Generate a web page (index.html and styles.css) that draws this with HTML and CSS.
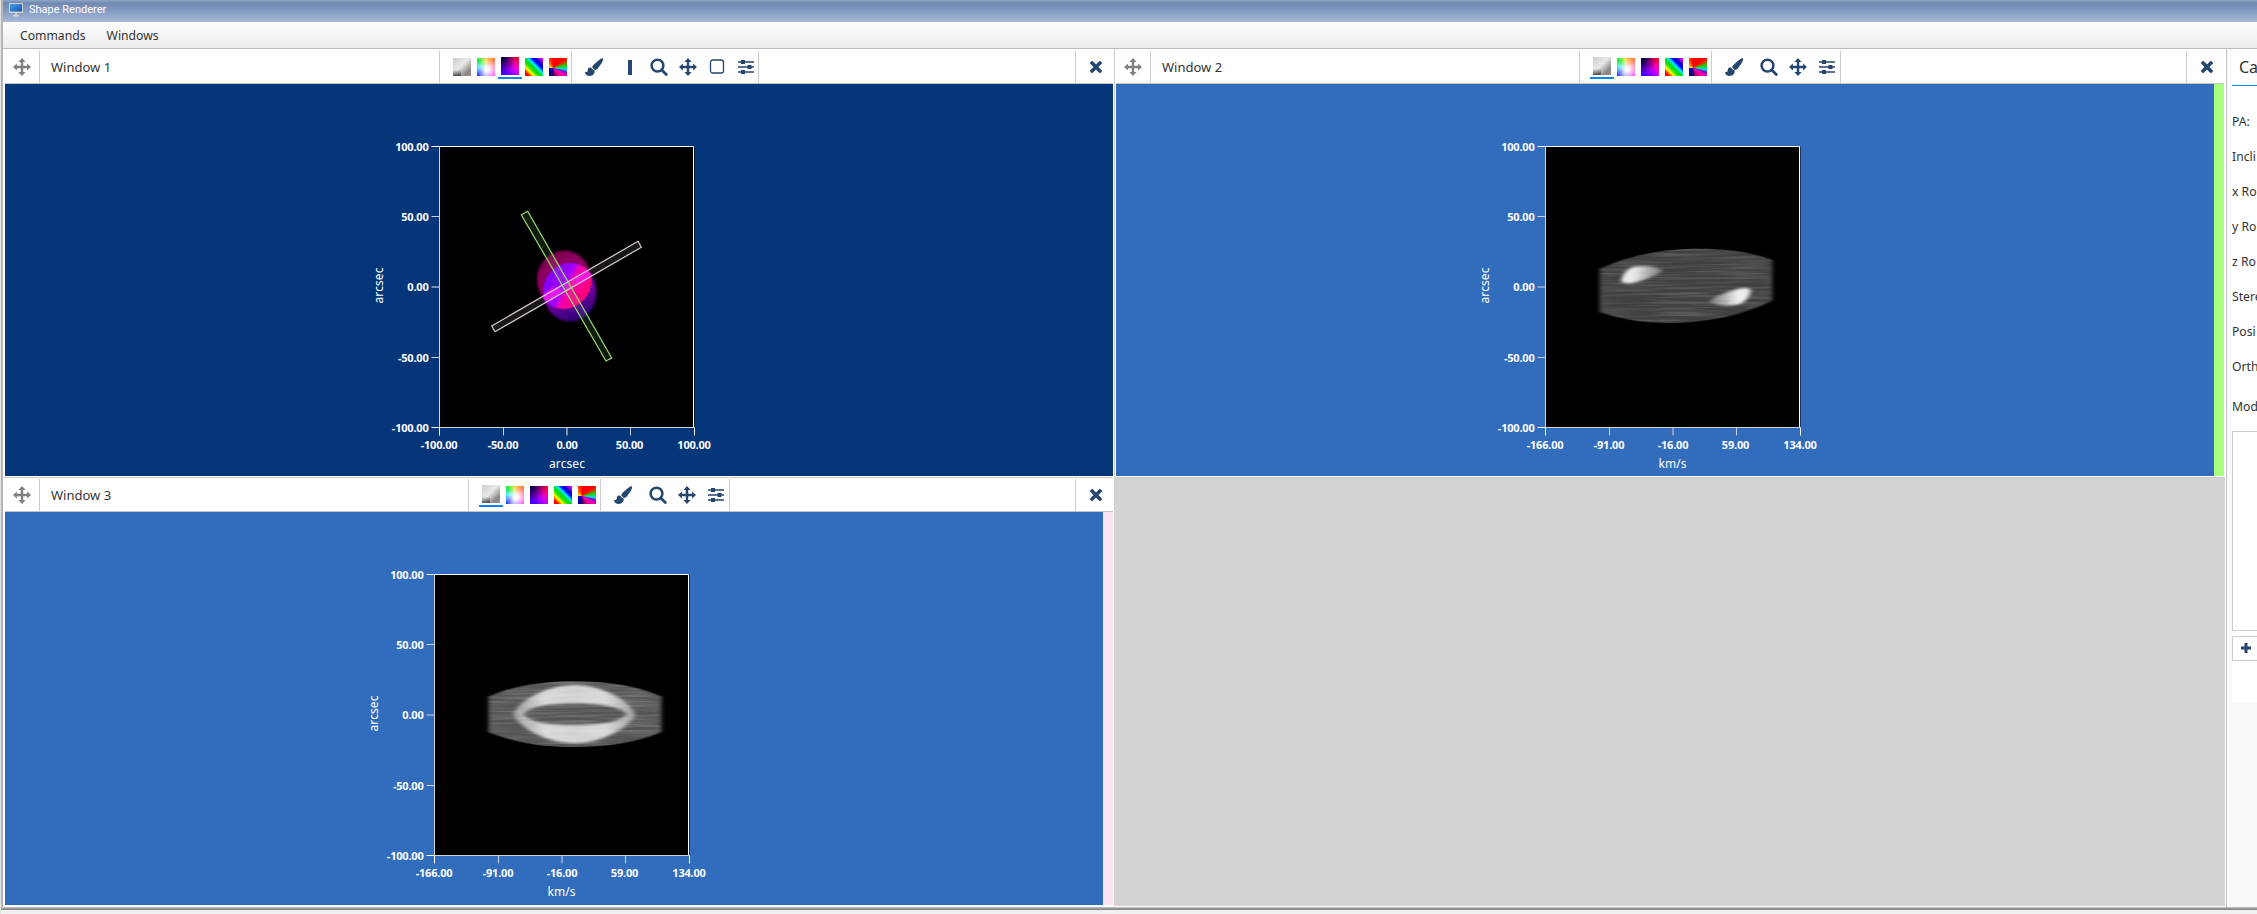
FILE: index.html
```html
<!DOCTYPE html>
<html lang="en">
<head>
<meta charset="utf-8">
<title>Shape Renderer</title>
<link rel="stylesheet" href="styles.css">
</head>
<body>
<svg class="defs" width="0" height="0">
  <defs>
    <symbol id="i-move" viewBox="0 0 18 18"><path fill="currentColor" d="M9 0l3.600 3.900h-2.400v3.900h3.900V5.400L18 9l-3.900 3.600v-2.400h-3.900v3.900h2.400L9 18l-3.600-3.900h2.400v-3.900H3.900v2.400L0 9l3.900-3.600v2.400h3.900V3.900H5.400z"/></symbol>
    <symbol id="i-brush" viewBox="0 0 18 18"><path fill="currentColor" d="M17.800.2c.7 1.300-.3 3.600-1.600 5.600l-3.400 4.700c-.8 1-1.900 1.500-3.100 1.400L7.300 9.600c0-1.200.6-2.200 1.600-3.100l4.500-4C15 1.100 16.700-.2 17.800.2zM4.700 9.400c1.500-.1 2 .6 2.500 1.500.7.9 1.700 1.200 2.500 1.600.3 3.200-1.900 5.500-5 5.500C2.400 18 .9 16.900.3 15.200c-.3-.8-.2-1.500.3-1.500 1.100.6 1.800.4 2-.8.3-1.900.6-3.300 2.100-3.500z"/></symbol>
    <symbol id="i-search" viewBox="0 0 18 18"><g fill="none" stroke="currentColor"><circle cx="7.500" cy="7.600" r="5.900" stroke-width="2.500"/><path d="M11.800 12l4.500 4.500" stroke-width="2.800" stroke-linecap="round"/></g></symbol>
    <symbol id="i-square" viewBox="0 0 18 18"><rect x="2.500" y="2" width="13" height="13" rx="2.200" fill="none" stroke="currentColor" stroke-width="1.300"/></symbol>
    <symbol id="i-sliders" viewBox="0 0 18 18"><path d="M1 4h16M1 9h16M1 14h16" stroke="currentColor" stroke-width="1.300"/><path fill="currentColor" d="M4 2h4v4H4zM10.500 7h4v4h-4zM4 12h4v4H4z"/></symbol>
    <symbol id="i-bar" viewBox="0 0 4 15"><path fill="currentColor" d="M0 0h4v15H0z"/></symbol>
    <symbol id="i-close" viewBox="0 0 12 12"><path d="M2.100 2.100l7.800 7.800M9.900 2.100L2.100 9.900" stroke="currentColor" stroke-width="3.600" stroke-linecap="square"/></symbol>
    <g id="frame">
      <rect width="255" height="281" fill="#000"/>
    </g>
    <g id="axes" fill="none" stroke="#fff">
      <path d="M0 0H254V281"/>
      <path d="M0 0V281H255" stroke="#d2d2d2"/>
      <path d="M-8 0H0M-8 281H0M0 281V289M255 281V289"/>
      <path d="M-8 70H0M-8 211H0M64 281V289M191 281V289" stroke="#c5d4ea"/>
      <path d="M-8 140.500H0M127.500 281V289" stroke="#9db2d2" stroke-width="1.500"/>
    </g>
    <g id="ylabels" text-anchor="end" class="tick">
      <text x="-11" y="4">100.00</text><text x="-11" y="74">50.00</text><text x="-11" y="144">0.00</text><text x="-11" y="215">-50.00</text><text x="-11" y="285">-100.00</text>
    </g>
    <g id="vlabels" text-anchor="middle" class="tick">
      <text x="-.5" y="302">-166.00</text><text x="63.500" y="302">-91.00</text><text x="127.500" y="302">-16.00</text><text x="190" y="302">59.00</text><text x="254.500" y="302">134.00</text>
      <text x="127" y="321" class="axis" textLength="28">km/s</text>
    </g>
    <filter id="soft" x="-20%" y="-20%" width="140%" height="140%"><feGaussianBlur stdDeviation="1"/></filter>
    <filter id="softer" x="-20%" y="-20%" width="140%" height="140%"><feGaussianBlur stdDeviation="2 0.900"/></filter>
    <filter id="edge" x="-10%" y="-10%" width="120%" height="120%"><feGaussianBlur stdDeviation="2 0.300"/></filter>
    <filter id="grain" x="0" y="0" width="100%" height="100%">
      <feTurbulence type="fractalNoise" baseFrequency="0.018 0.450" numOctaves="2" seed="4"/>
      <feColorMatrix values="0 0 0 0 1  0 0 0 0 1  0 0 0 0 1  2.200 0 0 0 -0.850"/>
      <feComposite operator="in" in2="SourceGraphic"/>
      <feGaussianBlur stdDeviation="2 0.300"/>
    </filter>
    <clipPath id="redClip"><ellipse cx="124.500" cy="133" rx="27.500" ry="29.500"/></clipPath>
    <clipPath id="blueClip"><ellipse cx="130.500" cy="146" rx="27" ry="29.500"/></clipPath>
    <linearGradient id="redLobe" x1="0" y1="0" x2=".5" y2="1"><stop offset="0" stop-color="#5d0030"/><stop offset=".35" stop-color="#8c0060"/><stop offset="1" stop-color="#900070"/></linearGradient>
    <linearGradient id="blueLobe" x1=".3" y1="0" x2=".7" y2="1"><stop offset="0" stop-color="#8a00d0"/><stop offset=".6" stop-color="#6b0098"/><stop offset="1" stop-color="#260078"/></linearGradient>
    <linearGradient id="core" gradientUnits="userSpaceOnUse" x1="118" y1="119" x2="137" y2="160"><stop offset="0" stop-color="#8400f4"/><stop offset=".43" stop-color="#a000ff"/><stop offset=".56" stop-color="#f800a8"/><stop offset="1" stop-color="#ff0070"/></linearGradient>
    <linearGradient id="knotA"><stop offset="0" stop-color="#eee"/><stop offset=".3" stop-color="#e8e8e8"/><stop offset=".65" stop-color="#aaa"/><stop offset="1" stop-color="#777"/></linearGradient>
    <linearGradient id="knotB"><stop offset="0" stop-color="#777"/><stop offset=".35" stop-color="#aaa"/><stop offset=".7" stop-color="#f2f2f2"/><stop offset="1" stop-color="#ddd"/></linearGradient>
    <linearGradient id="ring"><stop offset="0" stop-color="#999"/><stop offset=".25" stop-color="#d8d8d8"/><stop offset=".5" stop-color="#d0d0d0"/><stop offset=".75" stop-color="#d8d8d8"/><stop offset="1" stop-color="#999"/></linearGradient>
    <linearGradient id="monitor" x1="0" y1="0" x2="1" y2="1"><stop offset="0" stop-color="#4a9be8"/><stop offset=".5" stop-color="#2c7cd2"/><stop offset="1" stop-color="#1453a8"/></linearGradient>
  </defs>
</svg>
<div class="app">
  <header class="titlebar">
    <svg class="logo" width="14" height="14" viewBox="0 0 14 14"><path fill="#d5d2cb" d="M0 0h14v10H0zM4 12h6v1.500H4zM6 10h2v2H6z"/><path fill="url(#monitor)" d="M1 1h12v7.500H1z"/></svg>
    <span class="title">Shape Renderer</span>
  </header>
  <nav class="menubar"><span>Commands</span><span>Windows</span></nav>
  <main class="work">
    <div class="windows">
      <section class="window">
        <div class="head">
          <div class="grip"><svg width="18" height="18"><use href="#i-move"/></svg></div>
          <div class="name">Window 1</div>
          <div class="swatches"><i class="sw gray"></i><i class="sw pastel"></i><i class="sw magenta on"></i><i class="sw stripes"></i><i class="sw wheel"></i></div>
          <div class="tools wide">
            <svg class="brush" width="18" height="18"><use href="#i-brush"/></svg><svg class="bar" width="4" height="15"><use href="#i-bar"/></svg><svg width="18" height="18"><use href="#i-search"/></svg><svg width="18" height="18"><use href="#i-move"/></svg><svg width="18" height="18"><use href="#i-square"/></svg><svg width="18" height="18"><use href="#i-sliders"/></svg>
          </div>
          <div class="close"><svg width="12" height="12"><use href="#i-close"/></svg></div>
        </div>
        <svg class="view navy" width="1108" height="392" viewBox="0 0 1108 392">
          <g transform="translate(434.500 62.500)">
            <use href="#frame"/>
            <g filter="url(#soft)">
              <ellipse cx="124.500" cy="133" rx="27" ry="29" fill="url(#redLobe)"/>
              <ellipse cx="130.500" cy="146" rx="26.500" ry="29" fill="url(#blueLobe)"/>
            </g>
            <g clip-path="url(#redClip)"><g clip-path="url(#blueClip)"><g filter="url(#soft)">
              <ellipse cx="128" cy="139.500" rx="28" ry="22" transform="rotate(-38 128 139.500)" fill="url(#core)"/>
              <ellipse cx="144" cy="130" rx="10" ry="5" transform="rotate(-35 144 130)" fill="#f400dc"/>
              <ellipse cx="112" cy="148" rx="10" ry="5" transform="rotate(-35 112 148)" fill="#e800f0"/>
            </g></g></g>
            <path d="M52.200 179.500L55.500 185.200 201.800 100.800 198.500 94.800z" fill="#fbe4ef" fill-opacity=".1" stroke="#dccbd4" stroke-width="1.200"/>
            <path d="M81.800 68.200L88.200 64.800 172.200 211.500 166.500 214.500z" fill="#a9ff80" fill-opacity=".1" stroke="#96e070" stroke-width="1.200"/>
            <use href="#axes"/><use href="#ylabels"/>
            <g text-anchor="middle" class="tick">
              <text x="-.5" y="302">-100.00</text><text x="63.500" y="302">-50.00</text><text x="127.500" y="302">0.00</text><text x="190" y="302">50.00</text><text x="254.500" y="302">100.00</text>
              <text x="127.500" y="321" class="axis" textLength="36">arcsec</text>
              <text class="axis" textLength="36" transform="translate(-56.500 139) rotate(-90)">arcsec</text>
            </g>
          </g>
        </svg>
      </section>
      <section class="window right">
        <div class="head">
          <div class="grip"><svg width="18" height="18"><use href="#i-move"/></svg></div>
          <div class="name">Window 2</div>
          <div class="swatches"><i class="sw gray on"></i><i class="sw pastel"></i><i class="sw magenta"></i><i class="sw stripes"></i><i class="sw wheel"></i></div>
          <div class="tools">
            <svg class="brush" width="18" height="18"><use href="#i-brush"/></svg><svg width="18" height="18"><use href="#i-search"/></svg><svg width="18" height="18"><use href="#i-move"/></svg><svg width="18" height="18"><use href="#i-sliders"/></svg>
          </div>
          <div class="close"><svg width="12" height="12"><use href="#i-close"/></svg></div>
        </div>
        <svg class="view green" width="1098" height="392" viewBox="0 0 1098 392">
          <g transform="translate(429.500 62.500)">
            <use href="#frame"/>
            <path filter="url(#edge)" fill="#3f3f3f" d="M54 122.500C88 107 120 102.200 154 102.200 182 102.200 204 105 227 113.500V154C198 169 160 176.500 124 176.500 96 176.500 72 172 54 165.500z"/>
            <g filter="url(#softer)">
              <path fill="url(#knotA)" d="M76 133C80 122 86 119.500 98 119.500 109 119.500 115 122 117 124 112 129 97 134 87 136.500 81 137 75 137 76 133z"/>
              <path fill="url(#knotB)" d="M205 146C202 155 195 159 183 159 172 159 166 157 164 155 169 149 184 145 194 142 200 141 207 141 205 146z"/>
            </g>
            <path filter="url(#grain)" opacity=".16" fill="#fff" d="M54 122.500C88 107 120 102.200 154 102.200 182 102.200 204 105 227 113.500V154C198 169 160 176.500 124 176.500 96 176.500 72 172 54 165.500z"/>
            <use href="#axes"/><use href="#ylabels"/><use href="#vlabels"/>
            <text class="axis" text-anchor="middle" textLength="36" transform="translate(-56.500 139) rotate(-90)">arcsec</text>
          </g>
        </svg>
      </section>
      <section class="window">
        <div class="head">
          <div class="grip"><svg width="18" height="18"><use href="#i-move"/></svg></div>
          <div class="name">Window 3</div>
          <div class="swatches"><i class="sw gray on"></i><i class="sw pastel"></i><i class="sw magenta"></i><i class="sw stripes"></i><i class="sw wheel"></i></div>
          <div class="tools">
            <svg class="brush" width="18" height="18"><use href="#i-brush"/></svg><svg width="18" height="18"><use href="#i-search"/></svg><svg width="18" height="18"><use href="#i-move"/></svg><svg width="18" height="18"><use href="#i-sliders"/></svg>
          </div>
          <div class="close"><svg width="12" height="12"><use href="#i-close"/></svg></div>
        </div>
        <svg class="view pink" width="1098" height="393" viewBox="0 0 1098 393">
          <g transform="translate(429.500 62.500)">
            <use href="#frame"/>
            <path filter="url(#edge)" fill="#555" d="M54 122C82 110 110 106.700 140 106.700 171 106.700 199 110 227 122V157.500C199 169 171 172.500 140 172.500 110 172.500 82 169 54 157.500z"/>
            <path filter="url(#softer)" fill="url(#ring)" fill-rule="evenodd" d="M79 140C84 126 112 110.500 140 110.500S195 126 201 140C195 153 168 168.500 140 168.500S84 153 79 140zM89 139.500C96 131 118 129 140 129S184 131 192 139.500C184 149 162 150.500 140 150.500S96 149 89 139.500z"/>
            <path filter="url(#grain)" opacity=".2" fill="#fff" d="M54 122C82 110 110 106.700 140 106.700 171 106.700 199 110 227 122V157.500C199 169 171 172.500 140 172.500 110 172.500 82 169 54 157.500z"/>
            <use href="#axes"/><use href="#ylabels"/><use href="#vlabels"/>
            <text class="axis" text-anchor="middle" textLength="36" transform="translate(-56.500 139) rotate(-90)">arcsec</text>
          </g>
        </svg>
      </section>
      <section class="vacant"></section>
    </div>
    <aside class="side">
      <div class="sheet">
        <h2>Ca</h2>
        <div class="props"><span>PA:</span><span>Incli</span><span>x Ro</span><span>y Ro</span><span>z Ro</span><span>Stere</span><span>Posi</span><span>Orth</span></div>
        <div class="modules">Mod</div>
        <div class="list"></div>
        <div class="add"><svg width="10" height="10" viewBox="0 0 10 10"><path d="M5 0v10M0 5h10" stroke="#24466f" stroke-width="3"/></svg></div>
      </div>
    </aside>
  </main>
  <footer class="foot"></footer>
</div>
</body>
</html>
```
FILE: styles.css
```css
* { box-sizing: border-box; }
body { margin: 0; overflow: hidden; background: #f0f0f0; font-family: "Noto Sans", "Open Sans", sans-serif; font-size: 13px; color: #333; }
.defs { position: absolute; }
.app { width: 2257px; height: 914px; overflow: hidden; display: flex; flex-direction: column; border-left: 1px solid #e4e4e4; box-shadow: inset 2px 0 #b4b4b4; }
.titlebar { height: 22px; flex: none; margin-left: 2px; padding-left: 6px; display: flex; align-items: center; gap: 6px; background: linear-gradient(#8ea6c9 0, #7189b0 3px, #8199c2 10px, #a3b6d6 21px, #b0c0dc); }
.logo { margin-top: -3px; }
.title { color: #fff; font: 11px/20px Roboto, sans-serif; margin-top: -2px; }
.menubar { height: 27px; flex: none; margin-left: 2px; padding-left: 17px; display: flex; gap: 21px; font-size: 12.2px; line-height: 27px; background: linear-gradient(#fdfdfd, #ececec); border-bottom: 1px solid #bbb; }
.work { height: 858px; flex: none; margin-left: 2px; display: flex; background: #fff; }
.windows { width: 2223px; flex: none; display: grid; grid-template-columns: 1111px 1112px; grid-template-rows: 428px 430px; }
.window { padding-left: 2px; width: 1110px; }
.window.right { width: 1110px; padding-left: 1px; border-left: 1px solid #ccc; }
.head { height: 35px; display: flex; padding-top: 2px; border-bottom: 1px solid #c4c4c4; color: #24466f; }
.window:nth-child(3) { border-top: 1px solid #ccc; }
.window:nth-child(3) .head { height: 34px; padding-top: 1px; }
.head > div { height: 32px; display: flex; align-items: center; }
.grip { width: 35px; padding-left: 8px; color: #808080; border-right: 1px solid #ccc; }
.name { width: 429px; padding-left: 11px; color: #333; border-right: 1px solid #ccc; }
.window:nth-child(1) .name { width: 400px; }
.swatches { width: 132px; gap: 6px; padding-left: 13px; border-right: 1px solid #ccc; }
.sw { width: 18px; height: 18px; flex: none; position: relative; }
.sw.on { top: -1px; }
.sw.on::after { content: ""; position: absolute; left: -3px; top: 20px; width: 24px; height: 2px; background: #0a84ff; }
.gray { background: linear-gradient(0deg, rgba(40,40,40,.75), transparent 35%) left / 8px 18px no-repeat, linear-gradient(135deg, #ccc, #e9e9e9 45%, #8b8585 80%, #989090); }
.pastel { background: radial-gradient(circle at 55% 62%, #fff 12%, transparent 75%), conic-gradient(from 0deg at 50% 50%, #ffd040, #ff8040 12%, #ff60c0 30%, #ff40ff 38%, #8080ff 52%, #2030ff 62%, #30e0ff 75%, #20f040 87%, #ffe040); }
.magenta { background: radial-gradient(circle at 0 0, #000040 10%, transparent 65%), linear-gradient(40deg, #4000ff 12%, #c000ff 45%, #ff00b0 68%, #ff0030 90%); }
.stripes { background: linear-gradient(45deg, #f00 0 12%, #ff0 25%, #20e000 38%, #00e020 48%, #00f0ff 58%, #0010ff 68%, #1000c0 78%, #d000ff 92%); }
.wheel { background: conic-gradient(from 0deg at 22% 55%, #f00 0 12%, #ff1000 16%, #20d000 22%, #00e0e0 27%, #8000d0 30%, #ff00b0 34%, #d00080 42%, #200060 50%, #0000e0 64%, #4000a0 74%, #ff0 78%, #ff8000 88%, #f00); }
.tools { padding-left: 13px; gap: 11px; width: 129px; border-right: 1px solid #ccc; }
.tools svg { flex: none; }
.tools.wide { width: 187px; }
.brush { margin-right: 6px; }
.wide .brush { margin-right: 0; }
.tools .bar { margin: 0 -3px 0 14px; }
.tools.wide svg:nth-child(3) { margin-left: 10px; }
.close { width: 38px; margin-left: auto; padding-left: 14px; border-left: 1px solid #ccc; }
.view { display: block; box-sizing: content-box; }
.navy { background: #06367a; }
.green, .pink { background: #326cbd; }
.green { border-right: 10px solid #a9ff80; }
.pink { border-right: 10px solid #fae3ef; }
.vacant { background: #d3d3d3; border-top: 1px solid #ccc; height: 429px; width: 1111px; }
.tick { font-size: 11px; font-weight: 700; fill: #fff; letter-spacing: -.2px; }
.axis { font-size: 12px; font-weight: 400; fill: #fff; letter-spacing: 0; }
.side { flex: 1; min-width: 0; overflow: hidden; border-left: 1px solid #c4c4c4; padding-left: 5px; background: #f9f9f9; }
.sheet { height: 653px; background: #fff; white-space: nowrap; font-size: 12.2px; }
h2 { margin: 0; height: 37px; padding-left: 7px; font-weight: 400; font-size: 16px; line-height: 36px; border-bottom: 1px solid #0a84ff; }
.props { padding-top: 18px; display: flex; flex-direction: column; }
.props span { height: 35px; line-height: 35px; }
.modules { height: 47px; line-height: 45px; }
.list { height: 200px; border: 1px solid #ccc; border-right: 0; }
.add { height: 25px; margin-top: 5px; padding: 6px 8px; border: 1px solid #ccc; border-right: 0; }
.add svg { display: block; }
.foot { height: 7px; flex: none; border-top: 1px solid #bbb; box-shadow: inset 0 1px #999, inset 0 2px #888; background: #f0f0f0; }
```
